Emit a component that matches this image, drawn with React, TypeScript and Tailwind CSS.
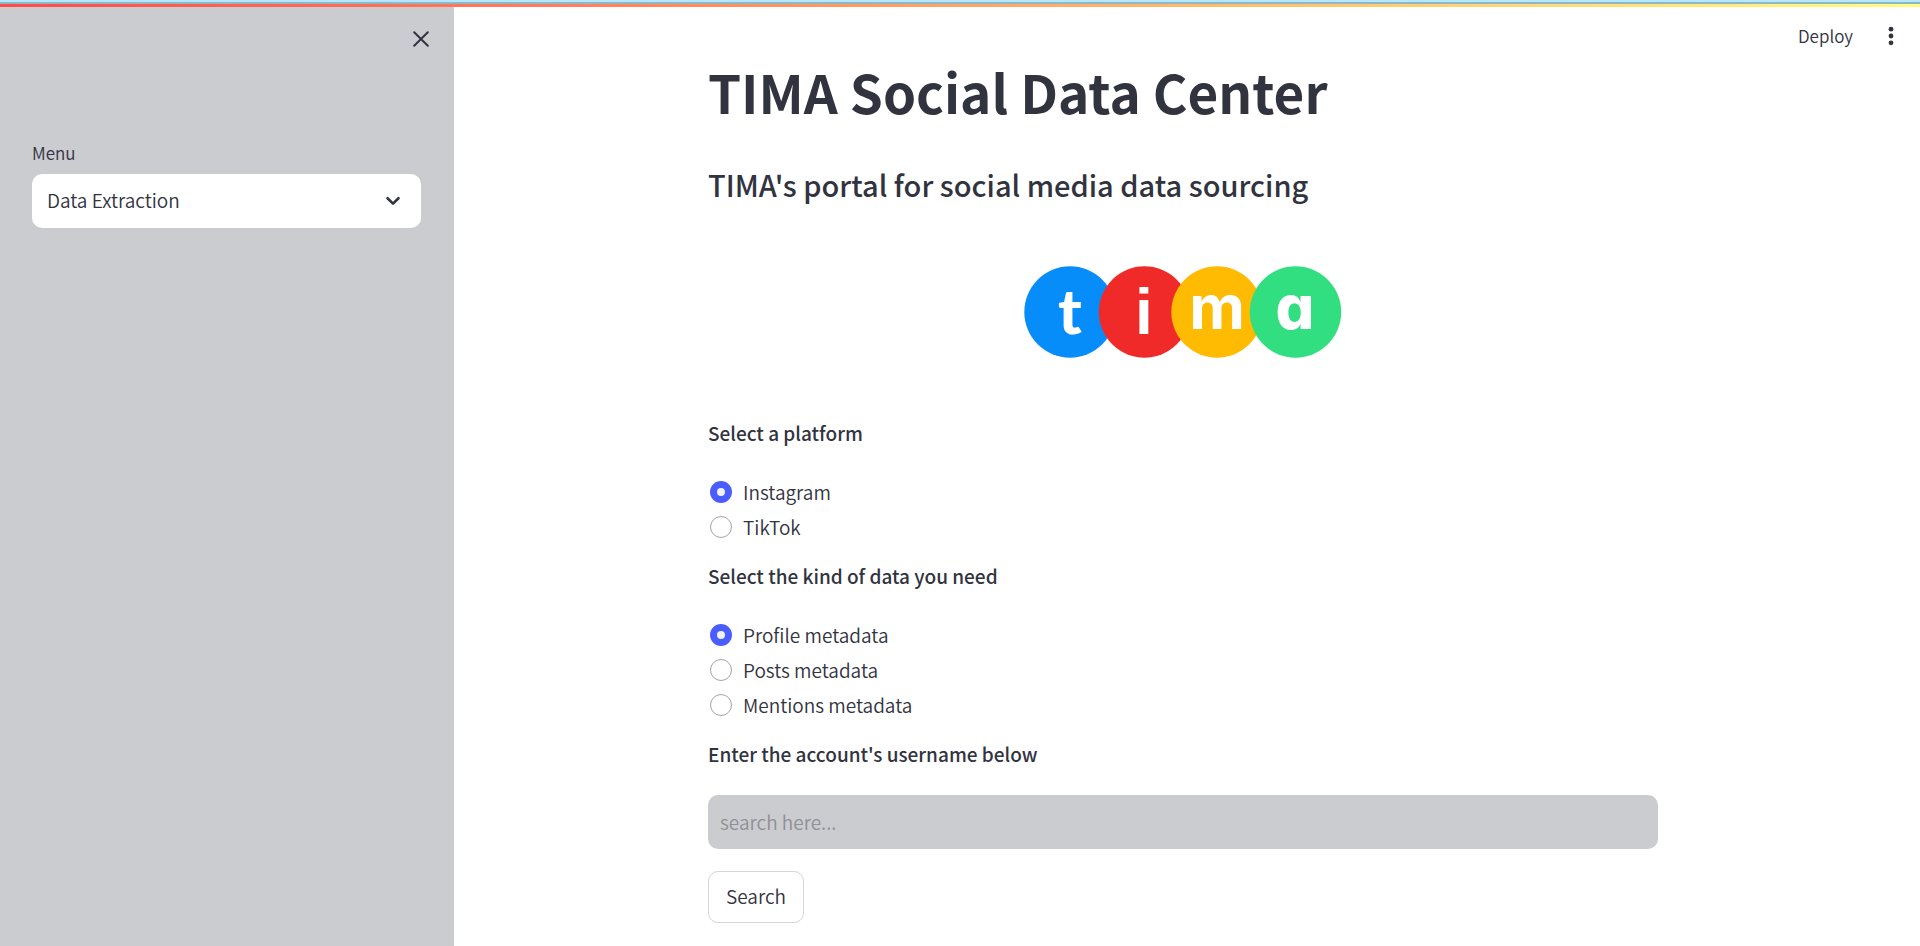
import { useState } from "react";

function CloseIcon() {
  return (
    <svg width="16" height="16" viewBox="0 0 16 16" fill="none" stroke="currentColor" strokeWidth="2" strokeLinecap="round" aria-hidden="true">
      <path d="M1.2 1.2 14.8 14.8M14.8 1.2 1.2 14.8" />
    </svg>
  );
}

function ChevronIcon() {
  return (
    <svg className="pointer-events-none absolute right-5 top-1/2 -translate-y-1/2" width="16" height="10" viewBox="0 0 16 10" fill="none" stroke="currentColor" strokeWidth="2.6" strokeLinecap="round" strokeLinejoin="round" aria-hidden="true">
      <path d="M2.5 2.2 8 7.6l5.5-5.4" />
    </svg>
  );
}

function DotsIcon() {
  return (
    <svg width="6" height="20" viewBox="0 0 6 20" fill="currentColor" aria-hidden="true">
      <circle cx="3" cy="3.2" r="2.4" />
      <circle cx="3" cy="10" r="2.4" />
      <circle cx="3" cy="16.8" r="2.4" />
    </svg>
  );
}

function Logo() {
  return (
    <svg className="mx-auto mt-[63px] block" width="318" height="92" viewBox="0 0 318 92" role="img" aria-label="tima">
      <circle cx="46" cy="46" r="45.7" fill="#078dfa" />
      <circle cx="120.5" cy="46" r="45.7" fill="#f02929" />
      <circle cx="193" cy="46" r="45.7" fill="#ffbb02" />
      <circle cx="271.5" cy="46" r="45.7" fill="#32df80" />
      <g fill="#fff" textAnchor="middle">
        <text x="46" y="68" fontSize="63" className="font-['Lato',sans-serif] font-black">t</text>
        <text x="120" y="68" fontSize="64" className="font-['Liberation_Sans',sans-serif] font-bold">i</text>
        <text x="193" y="63" fontSize="61" className="font-['Inter',sans-serif] font-bold">m</text>
        <text x="271" y="63" fontSize="61" className="font-['Inter',sans-serif] font-extrabold [font-feature-settings:'cv11']">a</text>
      </g>
    </svg>
  );
}

type RadioGroupProps = { name: string; title: string; options: string[] };

function RadioGroup({ name, title, options }: RadioGroupProps) {
  const [value, setValue] = useState(options[0]);
  return (
    <fieldset>
      <legend className="text-[19px] font-medium leading-7">{title}</legend>
      <div className="mt-[27px]">
        {options.map((option) => (
          <label key={option} className="flex h-[35px] items-center gap-[11px] pl-0.5 text-[19px] leading-7">
            <input
              type="radio"
              name={name}
              value={option}
              checked={value === option}
              onChange={() => setValue(option)}
              className="m-0 size-[22px] shrink-0 appearance-none rounded-full border border-[#a3a4a8] bg-white checked:border-[7px] checked:border-[#4a5dff] checked:bg-[#f0f2f6]"
            />
            {option}
          </label>
        ))}
      </div>
    </fieldset>
  );
}

export default function App() {
  return (
    <div className="flex min-h-screen flex-col bg-white font-['Noto_Sans_CJK_SC',sans-serif] font-[350] text-[#31333f]">
      <div className="h-0.5 bg-[#b5e8fb]" />
      <div className="h-0.5 bg-[#90b7c8]" />
      <div className="h-[3px] bg-linear-to-r/srgb from-[#ff4b4b] to-[#fffd80]" />
      <div className="flex flex-1">
        <aside className="w-[454px] shrink-0 bg-[#cbccd0] pl-8 pr-[33px]">
          <div className="-mr-2 flex justify-end pt-6">
            <button type="button" aria-label="Close sidebar" className="flex h-4 w-4">
              <CloseIcon />
            </button>
          </div>
          <label htmlFor="menu" className="mt-[94px] block text-[17px] leading-6">
            Menu
          </label>
          <div className="relative mt-[9px]">
            <select id="menu" className="h-[54px] w-full appearance-none rounded-[10px] bg-white px-[15px] pb-0.5 text-[19px]">
              <option>Data Extraction</option>
            </select>
            <ChevronIcon />
          </div>
        </aside>
        <div className="min-w-0 flex-1 pr-2">
          <header className="flex h-[54px] items-center justify-end gap-[35px] pr-[18px] pt-1">
            <button type="button" className="text-[17px]">Deploy</button>
            <button type="button" aria-label="Main menu">
              <DotsIcon />
            </button>
          </header>
          <main className="mx-auto max-w-[950px]">
            <h1 className="text-[53px] font-bold leading-[60px]">TIMA Social Data Center</h1>
            <h3 className="mt-11 text-[29px] font-medium leading-[38px]">TIMA's portal for social media data sourcing</h3>
            <Logo />
            <div className="mt-[61px] flex flex-col gap-[18px]">
              <RadioGroup name="platform" title="Select a platform" options={["Instagram", "TikTok"]} />
              <RadioGroup
                name="kind"
                title="Select the kind of data you need"
                options={["Profile metadata", "Posts metadata", "Mentions metadata"]}
              />
              <div>
                <label htmlFor="username" className="block text-[19px] font-medium leading-7">
                  Enter the account's username below
                </label>
                <input
                  id="username"
                  type="text"
                  placeholder="search here..."
                  className="mt-[27px] block h-[54px] w-full rounded-[10px] bg-[#cbccd0] px-3 pb-0.5 text-[19px] outline-none placeholder:text-[#8f9095]"
                />
                <button type="button" className="mt-[22px] block h-[52px] rounded-[10px] border border-[#d6d6d9] px-[17px] pb-0.5 text-[19px]">
                  Search
                </button>
              </div>
            </div>
          </main>
        </div>
      </div>
    </div>
  );
}
